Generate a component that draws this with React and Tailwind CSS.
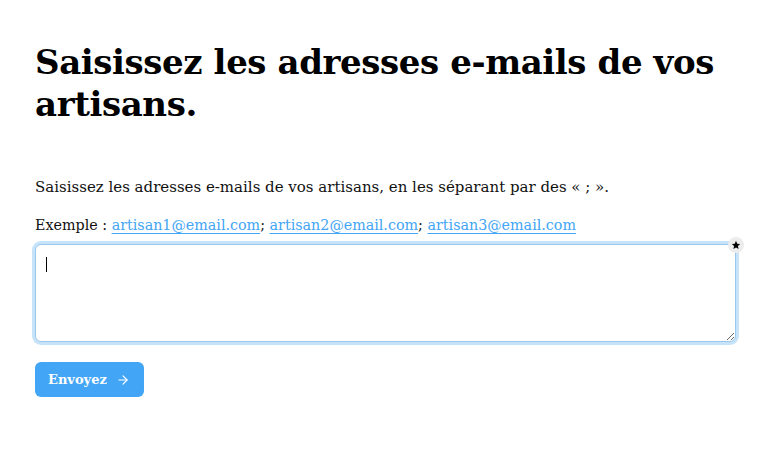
import React from "react";
import { ArrowRight } from "lucide-react";

const serif = { fontFamily: '"DejaVu Serif", "Liberation Serif", serif' };

const emails = ["artisan1@email.com", "artisan2@email.com", "artisan3@email.com"];

export default function App() {
  return (
    <div className="min-h-[459px] bg-white text-[#111]" style={serif}>
      <div className="pl-[35px] pr-[37px] pt-[41px]">
        {/* Title */}
        <h1 className="text-[34px] leading-[42px] font-bold tracking-[-0.4px] text-black">
          Saisissez les adresses e-mails de vos artisans.
        </h1>

        <p className="mt-[50px] text-[15px] leading-[24px]">
          Saisissez les adresses e-mails de vos artisans, en les séparant par des « ; ».
        </p>

        <p className="mt-[14px] text-[14.3px] leading-[24px]">
          Exemple :{" "}
          {emails.map((e, i) => (
            <span key={e}>
              <a className="text-[#42a5f5] underline decoration-[#42a5f5] underline-offset-[3px]">{e}</a>
              {i < emails.length - 1 ? "; " : ""}
            </span>
          ))}
        </p>

        {/* Textarea */}
        <div className="relative mt-[7px]">
          <textarea
            className="block w-full h-[98px] rounded-[6px] border border-[#9cc7ea] ring-[3px] ring-[#c6e3f9] outline-none resize-y bg-white px-3 py-2"
          />
          <span className="absolute left-[11px] top-[13px] w-px h-[15px] bg-black" />
          <span className="absolute -right-[8px] -top-[7px] w-[16px] h-[16px] rounded-full bg-[#ececec] flex items-center justify-center">
            <svg width="10" height="10" viewBox="0 0 24 24">
              <path d="M12 2l2.9 6.9 7.1.6-5.4 4.7 1.6 7.3L12 17.8 5.8 21.5l1.6-7.3L2 9.5l7.1-.6z" fill="#000" />
            </svg>
          </span>
        </div>

        {/* Submit */}
        <button className="mt-[20px] h-[35px] pl-[13px] pr-[14px] rounded-[6px] bg-[#42a5f5] text-white flex items-center gap-[9px] text-[13px] font-bold">
          Envoyez
          <ArrowRight className="w-[14px] h-[14px]" strokeWidth={2} />
        </button>
      </div>
    </div>
  );
}
